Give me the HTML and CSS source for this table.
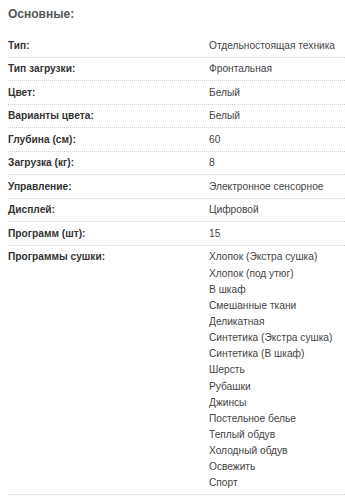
FILE: index.html
```html
<!DOCTYPE html>
<html lang="ru">
<head>
<meta charset="utf-8">
<link rel="stylesheet" href="styles.css">
</head>
<body>
<div class="specs">
  <h3 class="specs-title">Основные:</h3>
  <div class="row"><div class="label">Тип:</div><div class="value">Отдельностоящая техника</div></div>
  <div class="row"><div class="label">Тип загрузки:</div><div class="value">Фронтальная</div></div>
  <div class="row"><div class="label">Цвет:</div><div class="value">Белый</div></div>
  <div class="row"><div class="label">Варианты цвета:</div><div class="value">Белый</div></div>
  <div class="row"><div class="label">Глубина (см):</div><div class="value">60</div></div>
  <div class="row"><div class="label">Загрузка (кг):</div><div class="value">8</div></div>
  <div class="row"><div class="label">Управление:</div><div class="value">Электронное сенсорное</div></div>
  <div class="row"><div class="label">Дисплей:</div><div class="value">Цифровой</div></div>
  <div class="row"><div class="label">Программ (шт):</div><div class="value">15</div></div>
  <div class="row"><div class="label">Программы сушки:</div>
    <div class="value list">
      <div>Хлопок (Экстра сушка)</div>
      <div>Хлопок (под утюг)</div>
      <div>В шкаф</div>
      <div>Смешанные ткани</div>
      <div>Деликатная</div>
      <div>Синтетика (Экстра сушка)</div>
      <div>Синтетика (В шкаф)</div>
      <div>Шерсть</div>
      <div>Рубашки</div>
      <div>Джинсы</div>
      <div>Постельное белье</div>
      <div>Теплый обдув</div>
      <div>Холодный обдув</div>
      <div>Освежить</div>
      <div>Спорт</div>
    </div>
  </div>
</div>
</body>
</html>
```
FILE: styles.css
```css
html, body {
  margin: 0;
  padding: 0;
  background: #ffffff;
}
body {
  padding: 7px 0 0 8px;
  font-family: "Liberation Sans", Arial, sans-serif;
  font-size: 10.2px;
  color: #444;
}
.specs-title {
  margin: 0 0 12px 0;
  font-size: 12px;
  line-height: 15px;
  font-weight: bold;
  color: #555;
}
.row {
  display: flex;
  padding: 3.7px 0 2.75px 0;
  line-height: 16.1px;
  border-bottom: 1px dotted #cfcfcf;
}
.label {
  width: 201px;
  flex: none;
  font-weight: bold;
  color: #333;
}
.value {
  color: #444;
  white-space: nowrap;
}
.list div {
  line-height: 16.14px;
}
```
